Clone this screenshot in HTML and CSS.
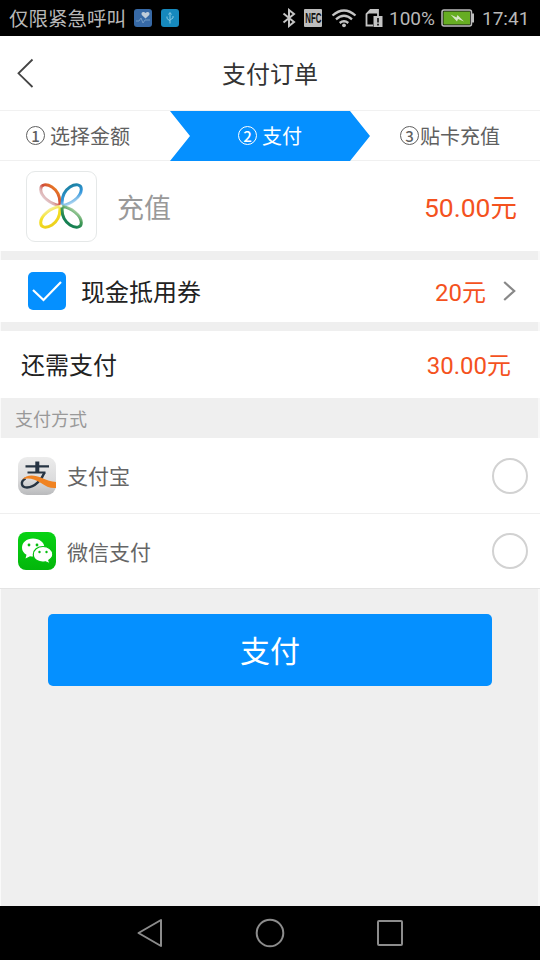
FILE: index.html
```html
<!DOCTYPE html>
<html lang="zh-CN">
<head>
<meta charset="utf-8">
<title>支付订单</title>
<link rel="stylesheet" href="styles.css">
</head>
<body>
<div class="phone">
  <div class="status">
    <span class="carrier">仅限紧急呼叫</span>
    <svg class="app-icon health" viewBox="0 0 18 18"><rect width="18" height="18" rx="3" fill="#3d75b8"/><path d="M11.500 9.500 7.800 6C6.500 3.500 9.500 2 11.500 4c2-2 5-.5 3.700 2z" fill="#d5e3f1"/><path d="M2 12h3l2-3 2 5 2-3h5" fill="none" stroke="#7fabd9"/></svg>
    <svg class="app-icon usb" viewBox="0 0 18 18"><rect width="18" height="18" rx="3" fill="#1689bd"/><path d="M9 14.500V4M7.500 5.500 9 3.500l1.500 2M6 7.500v2L9 12M12 7v2l-3 2" fill="none" stroke="#85c8e2"/></svg>
    <span class="grow"></span>
    <svg class="bt" viewBox="0 0 14 20"><path d="M1.500 5.500l10.500 8.500-5 4V2l5 4L1.500 14.500" fill="none" stroke="#c4c4c4" stroke-width="2"/></svg>
    <span class="nfc"><span>NFC</span></span>
    <svg class="wifi" viewBox="0 0 26 20"><path d="M1.500 7.500Q13-2.500 24.500 7.500M5 11.300q8-7 16 0M8.700 15q4.300-3.600 8.600 0" fill="none" stroke="#c4c4c4" stroke-width="2.300"/><circle cx="13" cy="17.300" r="1.900" fill="#c4c4c4"/></svg>
    <svg class="sim" viewBox="0 0 18 20"><path d="M8 17.500H1.500V6L5.500 2H13v6" fill="none" stroke="#c4c4c4" stroke-width="1.800"/><path d="M2 6 6 2h7v3.500H2z" fill="#c4c4c4"/><rect x="8.500" y="8" width="9" height="11" fill="#c4c4c4"/><path d="M13 10v4.500M13 15.800v1.700" stroke="#111" stroke-width="1.700"/></svg>
    <span class="pct">100%</span>
    <svg class="battery" viewBox="0 0 34 18"><rect x="1" y="1" width="29.500" height="16" rx="2" fill="#111" stroke="#bdbdbd" stroke-width="1.500"/><rect x="2.500" y="2.500" width="26.500" height="13" fill="#66ad22"/><path d="M31 4.500h2v9h-2z" fill="#bdbdbd"/><path d="M9.500 5.500l6 3 1-2.500 6.500 6.500-6-2.500-1 2.500z" fill="#d8e6c9"/></svg>
    <span class="time">17:41</span>
  </div>

  <div class="header">
    <svg class="back" viewBox="0 0 18 30"><path d="M15.500 1.500 1.500 15.300 15.500 29" fill="none" stroke="#444" stroke-width="1.800"/></svg>
    <h1>支付订单</h1>
  </div>

  <div class="steps">
    <div class="step first"><span class="num"><i>1</i></span><span class="step-name">选择金额</span></div>
    <div class="step active"><span class="num"><i>2</i></span><span class="step-name">支付</span></div>
    <div class="step last"><span class="num"><i>3</i></span><span class="step-name">贴卡充值</span></div>
  </div>

  <div class="product">
    <div class="logo">
      <svg viewBox="0 0 44 46">
        <defs>
          <linearGradient id="r" gradientUnits="userSpaceOnUse" x1="5" y1="18" x2="18" y2="6"><stop offset="0" stop-color="#e6d3d8"/><stop offset=".3" stop-color="#dcaeae"/><stop offset=".55" stop-color="#d04a38"/><stop offset="1" stop-color="#ea7d22"/></linearGradient>
          <linearGradient id="b" gradientUnits="userSpaceOnUse" x1="28" y1="3" x2="36" y2="20"><stop offset="0" stop-color="#187f9e"/><stop offset=".6" stop-color="#3597dc"/><stop offset="1" stop-color="#c3e0f4"/></linearGradient>
          <linearGradient id="y" gradientUnits="userSpaceOnUse" x1="7" y1="26" x2="15" y2="42"><stop offset="0" stop-color="#f7f2b0"/><stop offset=".4" stop-color="#f4e024"/><stop offset="1" stop-color="#ecd01d"/></linearGradient>
          <linearGradient id="g" gradientUnits="userSpaceOnUse" x1="37" y1="26" x2="28" y2="38"><stop offset="0" stop-color="#c4dfb8"/><stop offset=".5" stop-color="#459b57"/><stop offset="1" stop-color="#168052"/></linearGradient>
        </defs>
        <g fill="none" stroke-width="3">
          <path d="M20.800 22.500C12 21.500 2 14 1.700 6.500 1.500 1 7.500.5 13 4c6 4 8.500 11 7.800 18.500z" stroke="url(#r)"/>
          <path d="M23.200 22.500C32 21.500 42 14 42.300 6.500 42.500 1 36.500.5 31 4c-6 4-8.500 11-7.800 18.500z" stroke="url(#b)"/>
          <path d="M20.800 23.500C12 24.500 2 32 1.700 39.500 1.500 45 7.500 45.500 13 42c6-4 8.500-11 7.800-18.500z" stroke="url(#y)"/>
          <path d="M23.200 23.500C32 24.500 42 32 42.300 39.500 42.500 45 36.500 45.500 31 42c-6-4-8.500-11-7.800-18.500z" stroke="url(#g)"/>
        </g>
        <circle cx="22" cy="23" r="1.500" fill="#f3f7e8"/>
      </svg>
    </div>
    <span class="name">充值</span>
    <span class="price big">50.00元</span>
  </div>

  <div class="coupon">
    <svg class="check" viewBox="0 0 38 38"><rect width="38" height="38" rx="5" fill="#0590ff"/><path d="M5 18 15.500 28 33 10" fill="none" stroke="#fff" stroke-width="2.200"/></svg>
    <span class="label">现金抵用券</span>
    <span class="price">20元</span>
    <svg class="arrow" viewBox="0 0 13 20"><path d="M1.200 1 11.200 10 1.200 19" fill="none" stroke="#888" stroke-width="2.200"/></svg>
  </div>

  <div class="due"><span class="label">还需支付</span><span class="price">30.00元</span></div>
  <div class="section">支付方式</div>

  <div class="method">
    <svg class="pay-icon" viewBox="0 0 38 38">
      <defs><linearGradient id="a" x1="0" y1="0" x2="0" y2="1"><stop offset="0" stop-color="#ececec"/><stop offset=".6" stop-color="#dcdcdd"/><stop offset="1" stop-color="#b9babc"/></linearGradient></defs>
      <rect width="38" height="38" rx="9" fill="url(#a)"/>
      <path d="M7.500 9.300h23.500M9.500 15.500h18" fill="none" stroke="#263443" stroke-width="2.200"/>
      <path d="M19.300 4.500v11" fill="none" stroke="#263443" stroke-width="4"/>
      <path d="M26.500 15.500C24 22 17 30.500 9 30.500c-6 0-7-6-1.500-9" fill="none" stroke="#263443" stroke-width="2.400"/>
      <path d="M4 22.500c5-5.500 13-4.500 20-1.500 5 2.200 9 3.500 14 4V31c-6 .5-10-1.500-15-5C17 22 10 20 4 22.500z" fill="#f08322"/>
    </svg>
    <span class="method-name">支付宝</span><span class="radio"></span>
  </div>
  <div class="method last-method">
    <svg class="pay-icon" viewBox="0 0 38 38">
      <defs><linearGradient id="w" x1="0" y1="0" x2="0" y2="1"><stop offset="0" stop-color="#08d314"/><stop offset="1" stop-color="#03b60b"/></linearGradient></defs>
      <rect width="38" height="38" rx="8" fill="url(#w)"/>
      <path d="M15 6.500C8.500 6.500 4 10.500 4 15.800c0 3 1.800 5.500 4.500 7L7.500 26.500l4.500-2.300c7 1.500 14.500-2 14.500-8.400 0-5.300-5-9.300-11.500-9.300z" fill="#fff"/>
      <path d="M25 14.500c-5.500 0-9.700 3.500-9.700 8 0 5.200 5.700 8.700 12.200 7.300l4.500 2-1.200-3.600c2.500-1.500 4-3.500 4-5.700 0-4.500-4.300-8-9.800-8z" fill="#fff" stroke="#05c00e" stroke-width="1.200"/>
      <g fill="#05bd0e"><circle cx="11" cy="13" r="1.400"/><circle cx="19" cy="13" r="1.400"/><circle cx="21.500" cy="20" r="1.200"/><circle cx="28.500" cy="20" r="1.200"/></g>
    </svg>
    <span class="method-name">微信支付</span><span class="radio"></span>
  </div>

  <div class="action"><button class="pay">支付</button></div>

  <div class="nav">
    <svg viewBox="0 0 30 30"><path d="M26 2v26L3.500 15z"/></svg>
    <svg viewBox="0 0 30 30"><circle cx="15" cy="15" r="13.300"/></svg>
    <svg viewBox="0 0 30 30"><rect x="3" y="3" width="24" height="24" rx="1"/></svg>
  </div>
</div>
</body>
</html>
```

FILE: styles.css
```css
* { box-sizing: border-box; }
body { margin: 0; font-family: Roboto, "Noto Sans CJK SC", sans-serif; }
.phone { width: 540px; height: 960px; display: flex; flex-direction: column; background: #efefef; box-shadow: inset 1px 0 #fafafa, inset -2px 0 #f8f8f8; overflow: hidden; white-space: nowrap; }
.phone > div { flex-shrink: 0; }
svg { display: block; flex-shrink: 0; }

.status { height: 36px; background: #000; color: #b8b8b8; display: flex; align-items: center; padding: 0 10px 0 9px; }
.carrier { font-size: 19.5px; width: 125px; line-height: 34px; padding-top: 3px; }
.app-icon { width: 18px; height: 18px; }
.health { opacity: .9; }
.usb { margin-left: 9px; }
.grow { flex: 1; }
.bt { width: 14px; height: 20px; margin-right: 8px; }
.nfc { width: 18px; height: 18px; margin-right: 9px; border-radius: 1px; background: #bdbdbd; color: #111; font: bold 14px/18px "Liberation Sans", sans-serif; display: flex; align-items: center; justify-content: center; }
.nfc span { transform: scaleX(.56); }
.wifi { width: 26px; height: 20px; margin-right: 8px; }
.sim { width: 18px; height: 20px; margin-right: 6px; }
.pct { font-size: 19px; width: 52px; padding-top: 1px; }
.battery { width: 34px; height: 18px; }
.time { font-size: 19px; width: 48px; margin-left: 7px; padding-top: 1px; }

.header { height: 75px; background: #fff; display: grid; grid-template-columns: 60px 1fr 60px; align-items: center; border-bottom: 1px solid #f1f1f1; }
.back { width: 18px; height: 30px; margin-left: 17px; }
h1 { margin: 0; padding-bottom: 2px; font-size: 24px; font-weight: 400; color: #333; text-align: center; }

.steps { height: 50px; background: #fff; display: grid; grid-template-columns: 170px 200px 170px; border-bottom: 1px solid #f0f0f0; font-size: 20px; color: #606060; }
.step { display: flex; align-items: center; gap: 5px; }
.step-name { padding-bottom: 2px; }
.first { padding-left: 26px; }
.active { height: 50px; background: #0590ff; color: #fff; clip-path: polygon(0 0, 90% 0, 100% 50%, 90% 100%, 0 100%, 10% 50%); padding-left: 68px; }
.last { gap: 1px; padding-left: 30px; }
.num { width: 19px; height: 19px; margin-bottom: 2px; border: 1px solid currentColor; border-radius: 50%; display: flex; align-items: center; justify-content: center; }
.num i { font: 500 15px/17px "Noto Sans CJK SC", sans-serif; }

.product { height: 90px; background: #fff; display: flex; align-items: center; padding: 0 23px 0 26px; }
.logo { width: 71px; height: 71px; border: 1px solid #e5e8e8; border-radius: 9px; display: flex; align-items: center; justify-content: center; }
.logo svg { width: 44px; height: 46px; margin-right: 1px; }
.name { font-size: 27px; color: #999; margin-left: 20px; }
.price { margin-left: auto; padding-bottom: 2px; color: #f4521e; font-size: 24px; }
.price.big { font-size: 26.5px; }

.coupon { margin-top: 9px; height: 62px; background: #fff; display: flex; align-items: center; padding: 0 24px 0 28px; }
.check { width: 38px; height: 38px; }
.label { padding-bottom: 2px; font-size: 24px; color: #222; }
.coupon .label { margin-left: 15px; }
.arrow { width: 13px; height: 20px; margin-left: 17px; }
.due { margin-top: 9px; height: 67px; background: #fff; display: flex; align-items: center; padding: 0 29px 0 21px; }
.section { height: 40px; padding-left: 15px; line-height: 43px; font-size: 18px; color: #999; }
.method { height: 75px; background: #fff; display: flex; align-items: center; padding: 0 12px 0 18px; }
.last-method { height: 76px; border-top: 1px solid #efefef; border-bottom: 1px solid #e4e4e4; }
.pay-icon { width: 38px; height: 38px; }
.method-name { padding-bottom: 1px; font-size: 21px; color: #666; margin-left: 11px; }
.radio { width: 36px; height: 36px; border: 2px solid #d2d2d2; border-radius: 50%; margin-left: auto; }
.action { padding: 25px 48px 0; flex: 1; }
.pay { display: block; width: 100%; height: 72px; border: 0; border-radius: 5px; background: #0590ff; color: #fff; font: 30px/70px "Noto Sans CJK SC", sans-serif; padding: 0 0 2px; }
.nav { height: 54px; background: #000; display: flex; align-items: center; justify-content: center; gap: 90px; }
.nav svg { width: 30px; height: 30px; fill: none; stroke: #8c8c8c; stroke-width: 2; stroke-linejoin: round; }
```
